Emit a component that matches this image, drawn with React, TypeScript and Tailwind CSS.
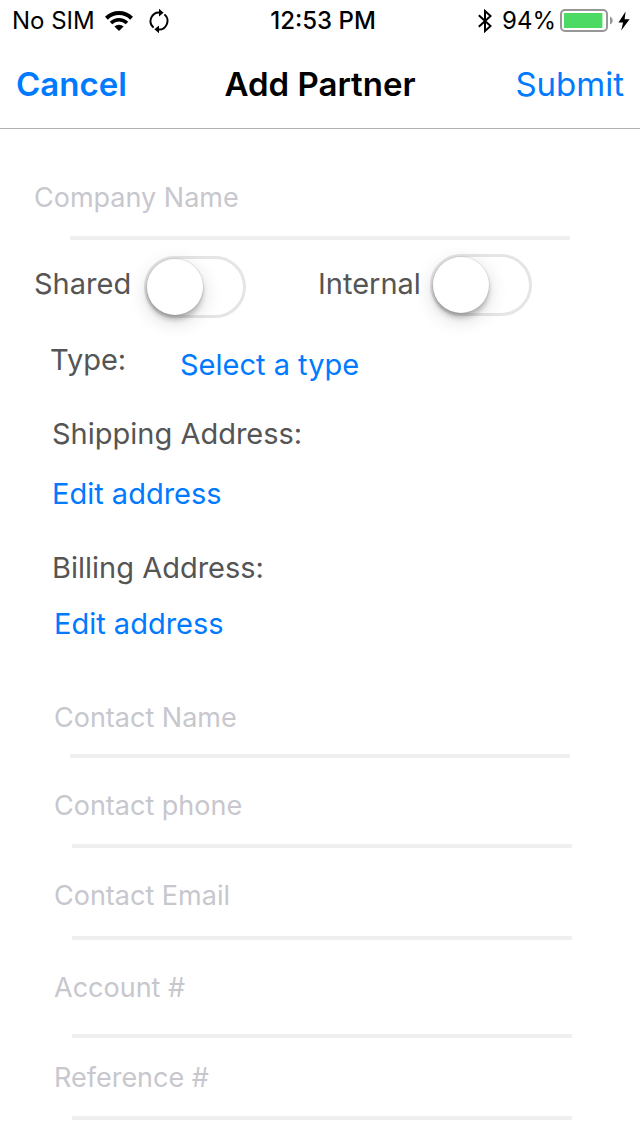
import { useId } from "react";

function WifiIcon() {
  return (
    <svg viewBox="0 0 28 20" className="h-5 w-7" aria-hidden="true">
      <g fill="none" stroke="#000">
        <path d="M1.4 7.2A18 18 0 0 1 26.6 7.2" strokeWidth="4" />
        <path d="M6 12A11.4 11.4 0 0 1 22 12" strokeWidth="3.6" />
      </g>
      <path d="M9.4 15.6a6.6 6.6 0 0 1 9.2 0L14 20z" />
    </svg>
  );
}

function SyncIcon() {
  return (
    <svg viewBox="0 0 20 26" className="h-[26px] w-5" aria-hidden="true">
      <g fill="none" stroke="#000" strokeWidth="1.9">
        <path d="M4.6 19.6A8.6 8.6 0 0 1 11 4.5" />
        <path d="M15.4 6.4A8.6 8.6 0 0 1 9 21.5" />
      </g>
      <path d="M10 .8 14.6 4.8 10 8.6z" />
      <path d="M10 25.2 5.4 21.2 10 17.4z" />
    </svg>
  );
}

function BluetoothIcon() {
  return (
    <svg viewBox="0 0 14 24" className="h-6 w-3.5" fill="none" stroke="#000" strokeWidth="2" aria-hidden="true">
      <path d="M.8 6.2 12.6 17 7 22V2L12.6 7 .8 17.8" />
    </svg>
  );
}

function BatteryIcon() {
  return (
    <svg viewBox="0 0 54 24" className="h-6 w-[54px]" aria-hidden="true">
      <rect x="1" y="1" width="46" height="21" rx="4" fill="none" stroke="#979797" strokeWidth="2" />
      <rect x="4" y="4" width="38.4" height="15" rx="0.6" fill="#4cd964" />
      <path d="M50 7.5c3.6 1.4 3.6 6.6 0 8z" fill="#979797" />
    </svg>
  );
}

function BoltIcon() {
  return (
    <svg viewBox="0 0 12 20" className="h-5 w-3" aria-hidden="true">
      <path d="M7.6.5.5 11.4h4.6L3.2 19.6 11.6 8.2H6.6z" />
    </svg>
  );
}

function StatusBar() {
  return (
    <div className="grid h-10 grid-cols-[1fr_auto_1fr] items-center pt-0.5 text-2xl leading-8">
      <div className="flex items-center pl-3">
        <span>No SIM</span>
        <span className="ml-2.5">
          <WifiIcon />
        </span>
        <span className="ml-4">
          <SyncIcon />
        </span>
      </div>
      <span className="pl-1.5 font-medium">12:53 PM</span>
      <div className="flex items-center justify-end pr-2.5">
        <BluetoothIcon />
        <span className="ml-2.5">94%</span>
        <span className="ml-1">
          <BatteryIcon />
        </span>
        <span className="ml-1">
          <BoltIcon />
        </span>
      </div>
    </div>
  );
}

type FieldProps = { label: string; type?: string };

function Field({ label, type = "text" }: FieldProps) {
  return (
    <input
      type={type}
      aria-label={label}
      placeholder={label}
      className="block h-9 w-full bg-transparent text-[27px] leading-9 text-[#555] outline-none placeholder:text-[#c7c7cd] placeholder:opacity-100"
    />
  );
}

function Switch({ label }: { label: string }) {
  const id = useId();
  return (
    <>
      <label htmlFor={id} className="text-[29px] leading-9">
        {label}
      </label>
      <input
        id={id}
        type="checkbox"
        role="switch"
        className="h-[62px] w-[102px] shrink-0 appearance-none rounded-full border-3 border-[#e5e5e5] bg-white before:block before:size-14 before:rounded-full before:bg-white before:shadow-[0_0_1px_1px_rgba(0,0,0,0.08),0_5px_5px_rgba(0,0,0,0.2),0_6px_20px_rgba(0,0,0,0.16)] checked:bg-[#4cd964] checked:before:translate-x-10"
      />
    </>
  );
}

const link = "block text-[29px] leading-9 text-[#007aff]";
const rule = "h-1 bg-[#efeff0]";

export default function App() {
  return (
    <div className="min-h-screen bg-white font-['Inter',sans-serif] text-black">
      <header className="border-b border-[#b2b2b2]">
        <StatusBar />
        <div className="grid h-[88px] grid-cols-[1fr_auto_1fr] items-center px-4 text-[33px] leading-10">
          <button type="button" className="justify-self-start font-semibold text-[#007aff]">
            Cancel
          </button>
          <h1 className="font-semibold">Add Partner</h1>
          <button type="button" className="justify-self-end text-[#007aff]">
            Submit
          </button>
        </div>
      </header>

      <form className="pb-4 text-[#555]">
        <div className="px-[34px] pt-[51px]">
          <Field label="Company Name" />
        </div>
        <div className={`mx-[70px] mt-5 ${rule}`} />

        <div className="mt-3.5 flex items-start pl-[34px]">
          <div className="flex w-[284px] items-start justify-between pr-[72px] pt-0.5 [&>label]:pt-2.5">
            <Switch label="Shared" />
          </div>
          <div className="flex w-[214px] items-start justify-between [&>label]:pt-3">
            <Switch label="Internal" />
          </div>
        </div>

        <div className="mt-6 flex items-start pl-[50px]">
          <span className="w-[130px] text-[29px] leading-9">Type:</span>
          <button type="button" className={`mt-[5px] ${link}`}>
            Select a type
          </button>
        </div>

        <section className="mt-[33px] pl-[52px]">
          <h2 className="text-[29px] leading-9">Shipping Address:</h2>
          <button type="button" className={`mt-6 ${link}`}>
            Edit address
          </button>
        </section>
        <section className="mt-[38px] pl-[52px]">
          <h2 className="text-[29px] leading-9">Billing Address:</h2>
          <button type="button" className={`mt-5 pl-0.5 ${link}`}>
            Edit address
          </button>
        </section>

        <div className="mt-[58px] px-[54px]">
          <Field label="Contact Name" />
        </div>
        <div className={`mx-[70px] mt-[18px] ${rule}`} />
        <div className="mt-[30px] px-[54px]">
          <Field label="Contact phone" type="tel" />
        </div>
        <div className={`ml-[72px] mr-[68px] mt-5 ${rule}`} />
        <div className="mt-[30px] px-[54px]">
          <Field label="Contact Email" type="email" />
        </div>
        <div className={`ml-[72px] mr-[68px] mt-[22px] ${rule}`} />
        <div className="mt-[30px] px-[54px]">
          <Field label="Account #" />
        </div>
        <div className={`ml-[72px] mr-[68px] mt-7 ${rule}`} />
        <div className="mt-[22px] px-[54px]">
          <Field label="Reference #" />
        </div>
        <div className={`ml-[72px] mr-[68px] mt-5 ${rule}`} />
      </form>
    </div>
  );
}
